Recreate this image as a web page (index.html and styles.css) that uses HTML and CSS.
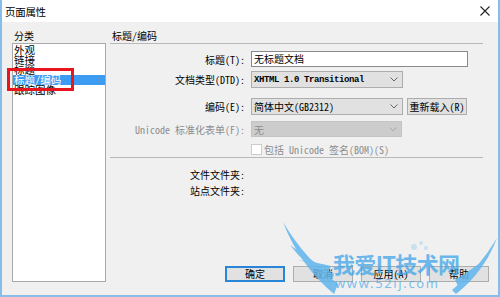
FILE: index.html
```html
<!DOCTYPE html>
<html lang="zh-CN">
<head>
    <meta charset="UTF-8">
    <title>页面属性</title>
    <link rel="stylesheet" href="styles.css">
</head>
<body>
    <div class="window">
        <div class="titlebar">
            <span class="title">页面属性</span>
            <svg class="close" width="10" height="10" viewBox="0 0 10 10">
                <path d="M0.5 0.5 L9.5 9.5 M9.5 0.5 L0.5 9.5" stroke="#222" stroke-width="1.1" fill="none"/>
            </svg>
        </div>

        <div class="dialog">
            <div class="sidebar">
                <div class="group-label">分类</div>
                <div class="listbox">
                    <div class="item">外观</div>
                    <div class="item">链接</div>
                    <div class="item">标题</div>
                    <div class="item selected">标题/编码</div>
                    <div class="item">跟踪图像</div>
                    <div class="mark"></div>
                </div>
            </div>

            <div class="panel">
                <div class="panel-title">标题/编码</div>

                <div class="row row-title">
                    <span class="label">标题(T):</span>
                    <div class="textbox">无标题文档</div>
                </div>

                <div class="row row-dtd">
                    <span class="label">文档类型(DTD):</span>
                    <div class="select">
                        <span class="value mono">XHTML 1.0 Transitional</span>
                        <svg class="chevron" width="8" height="5" viewBox="0 0 8 5"><polyline points="0.5,0.5 4,4 7.5,0.5" fill="none" stroke="#666" stroke-width="1"/></svg>
                    </div>
                </div>

                <div class="row row-encoding">
                    <span class="label">编码(E):</span>
                    <div class="controls">
                        <div class="select">
                            <span class="value">简体中文(GB2312)</span>
                            <svg class="chevron" width="8" height="5" viewBox="0 0 8 5"><polyline points="0.5,0.5 4,4 7.5,0.5" fill="none" stroke="#666" stroke-width="1"/></svg>
                        </div>
                        <div class="btn btn-reload">重新载入(R)</div>
                    </div>
                </div>

                <div class="row row-unicode">
                    <span class="label disabled">Unicode 标准化表单(F):</span>
                    <div class="select select-disabled">
                        <span class="value">无</span>
                        <svg class="chevron" width="8" height="5" viewBox="0 0 8 5"><polyline points="0.5,0.5 4,4 7.5,0.5" fill="none" stroke="#aaa" stroke-width="1"/></svg>
                    </div>
                </div>

                <div class="row row-check">
                    <span></span>
                    <div class="check">
                        <span class="checkbox"></span>
                        <span class="disabled">包括 Unicode 签名(BOM)(S)</span>
                    </div>
                </div>

                <div class="separator"></div>

                <div class="row row-folder">
                    <span class="label">文件文件夹:</span>
                    <span></span>
                </div>
                <div class="row row-site">
                    <span class="label">站点文件夹:</span>
                    <span></span>
                </div>

                <div class="buttons">
                    <div class="btn btn-default">确定</div>
                    <div class="btn">取消</div>
                    <div class="btn">应用(A)</div>
                    <div class="btn">帮助</div>
                </div>
            </div>
        </div>
    </div>

    <!-- 水印 -->
    <svg class="watermark" width="500" height="297" viewBox="0 0 500 297">
        <g fill="#5fb5ec" opacity="0.85">
            <path d="M334 294 Q300 266 283 222 Q304 258 338 284 Z"/>
            <path d="M331 283 Q306 266 290 245 Q313 262 334 274 Z"/>
            <path d="M328 272 Q310 262 297 260 Q316 262 331 266 Z"/>
            <path d="M452 290 Q478 270 497 238 Q484 272 456 294 Z"/>
            <path d="M455 280 Q474 268 489 256 Q478 272 458 286 Z"/>
            <circle cx="414" cy="247" r="3" opacity="0.3"/>
            <circle cx="421" cy="243" r="2" opacity="0.3"/>
            <circle cx="426" cy="248" r="2" opacity="0.3"/>
        </g>
        <text x="333" y="273" textLength="127" class="wm-title">我爱IT技术网</text>
        <text x="335" y="288" textLength="103" class="wm-url">www.52ij.com</text>
    </svg>
</body>
</html>
```

FILE: styles.css
```css
body {
    margin: 0;
    width: 500px;
    height: 297px;
    overflow: hidden;
    position: relative;
    background-color: #ffffff;
    font-family: "Noto Sans Mono CJK SC", "Noto Sans CJK SC", sans-serif;
    font-size: 10px;
    color: #000;
}

.window {
    box-sizing: border-box;
    width: 500px;
    height: 297px;
    border: 2px solid #86bde9;
    border-top: none;
    background-color: #f0f0f0;
    display: flex;
    flex-direction: column;
}

.titlebar {
    height: 22px;
    background-color: #ffffff;
    display: flex;
    align-items: center;
    justify-content: space-between;
    padding: 0 8px 0 3px;
}

.title {
    font-family: "Noto Sans CJK SC", sans-serif;
    font-size: 10.5px;
    letter-spacing: -0.3px;
}

.dialog {
    flex: 1;
    display: flex;
    gap: 4px;
    padding: 0 9px 13px 10px;
}

/* 左侧分类 */
.sidebar {
    width: 94px;
    display: flex;
    flex-direction: column;
}

.group-label {
    margin-top: 6px;
    line-height: 15px;
    padding-left: 2px;
}

.listbox {
    flex: 1;
    position: relative;
    background-color: #ffffff;
    border: 1px solid #a9a9a9;
    padding-top: 1px;
}

.item {
    line-height: 10px;
    height: 10px;
    padding-left: 1px;
    font-size: 10.5px;
    white-space: nowrap;
}

.item.selected {
    background-color: #3e9bf2;
    color: #ffffff;
}

.mark {
    position: absolute;
    left: -6px;
    top: 24px;
    width: 67px;
    height: 23px;
    box-sizing: border-box;
    border: 3px solid #e8141e;
}

/* 右侧面板 */
.panel {
    flex: 1;
    display: flex;
    flex-direction: column;
}

.panel-title {
    margin-top: 6px;
    margin-right: 6px;
    line-height: 15px;
    padding-left: 2px;
    border-bottom: 1px solid #b9b9b9;
}

.row {
    display: grid;
    grid-template-columns: 135px auto;
    column-gap: 6px;
    align-items: center;
}

.label {
    text-align: right;
    white-space: nowrap;
}

.disabled {
    color: #8d8d8d;
}

.row-title { margin-top: 7px; height: 16px; }
.row-dtd { margin-top: 4px; height: 17px; }
.row-encoding { margin-top: 10px; height: 17px; }
.row-unicode { margin-top: 6px; height: 16px; }
.row-check { margin-top: 5px; height: 12px; }
.row-folder { margin-top: 9px; height: 14px; }
.row-site { margin-top: 2px; height: 14px; }

.textbox {
    box-sizing: border-box;
    width: 217px;
    height: 16px;
    line-height: 14px;
    padding-left: 2px;
    background-color: #ffffff;
    border: 1px solid #8a8a8a;
}

.controls {
    display: flex;
    gap: 4px;
}

.select {
    box-sizing: border-box;
    width: 152px;
    height: 17px;
    display: flex;
    align-items: center;
    justify-content: space-between;
    padding: 0 4px 0 2px;
    background-color: #e1e1e1;
    border: 1px solid #adadad;
}

.select .value {
    white-space: nowrap;
}

.mono {
    font-family: "Liberation Mono", monospace;
    font-weight: bold;
    font-size: 9px;
    letter-spacing: -0.4px;
}

.select-disabled {
    width: 151px;
    height: 16px;
    background-color: #cccccc;
    border-color: #c4c4c4;
    color: #8d8d8d;
}

.check {
    display: flex;
    align-items: center;
    gap: 2px;
}

.checkbox {
    box-sizing: border-box;
    width: 11px;
    height: 11px;
    background-color: #ffffff;
    border: 1px solid #cccccc;
}

.separator {
    margin-top: 3px;
    margin-right: 6px;
    border-top: 1px solid #b9b9b9;
}

.btn {
    box-sizing: border-box;
    width: 60px;
    height: 16px;
    line-height: 14px;
    text-align: center;
    background-color: #e1e1e1;
    border: 1px solid #adadad;
    white-space: nowrap;
}

.btn-reload {
    height: 17px;
    line-height: 15px;
}

.buttons {
    margin-top: auto;
    display: flex;
    justify-content: flex-end;
    gap: 8px;
}

.btn-default {
    border-color: #2a85d8;
    box-shadow: inset 0 0 0 1px #2a85d8;
}

/* 水印 */
.watermark {
    position: absolute;
    left: 0;
    top: 0;
    pointer-events: none;
}

.wm-title {
    font-family: "Noto Sans CJK SC", sans-serif;
    font-weight: bold;
    font-size: 22px;
    fill: #3fa5ea;
    opacity: 0.75;
}

.wm-url {
    font-family: "Noto Sans", sans-serif;
    font-size: 13px;
    fill: #4aaaea;
    opacity: 0.7;
}
```
